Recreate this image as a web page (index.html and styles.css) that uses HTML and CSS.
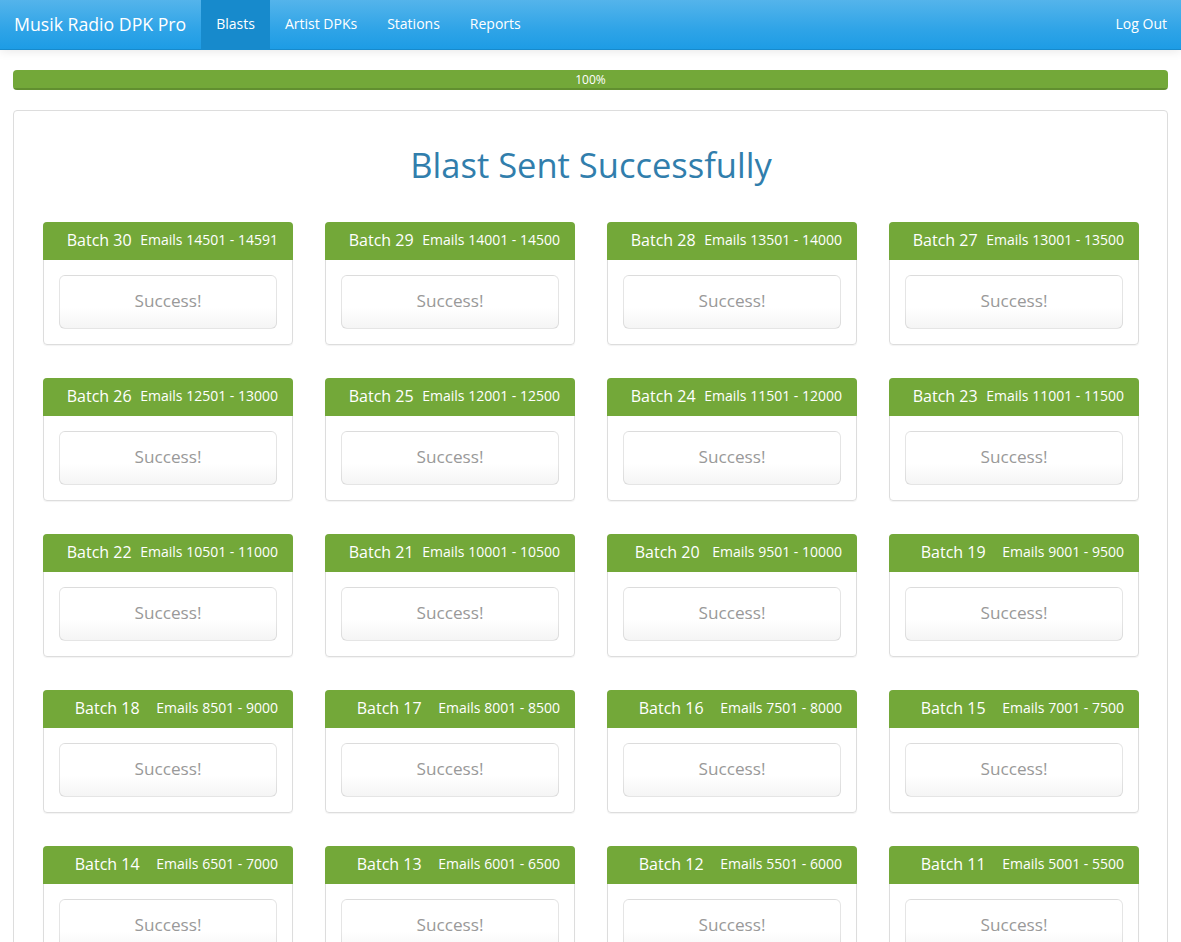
FILE: index.html
```html
<!DOCTYPE html>
<html lang="en">
<head>
<meta charset="utf-8">
<title>Musik Radio DPK Pro - Blasts</title>
<link rel="stylesheet" href="styles.css">
</head>
<body>
<nav class="navbar">
  <a class="brand" href="#">Musik Radio DPK Pro</a>
  <ul class="nav">
    <li class="active"><a href="#">Blasts</a></li>
    <li><a href="#">Artist DPKs</a></li>
    <li><a href="#">Stations</a></li>
    <li><a href="#">Reports</a></li>
  </ul>
  <ul class="nav nav-right">
    <li><a href="#">Log Out</a></li>
  </ul>
</nav>

<main class="page">
  <div class="progress"><div class="progress-bar">100%</div></div>

  <section class="panel">
    <h1 class="title">Blast Sent Successfully</h1>
    <div class="batches">
      <div class="batch"><div class="batch-head"><span class="batch-name">Batch 30</span><span class="batch-range">Emails 14501 - 14591</span></div><div class="batch-body"><div class="status">Success!</div></div></div>
      <div class="batch"><div class="batch-head"><span class="batch-name">Batch 29</span><span class="batch-range">Emails 14001 - 14500</span></div><div class="batch-body"><div class="status">Success!</div></div></div>
      <div class="batch"><div class="batch-head"><span class="batch-name">Batch 28</span><span class="batch-range">Emails 13501 - 14000</span></div><div class="batch-body"><div class="status">Success!</div></div></div>
      <div class="batch"><div class="batch-head"><span class="batch-name">Batch 27</span><span class="batch-range">Emails 13001 - 13500</span></div><div class="batch-body"><div class="status">Success!</div></div></div>
      <div class="batch"><div class="batch-head"><span class="batch-name">Batch 26</span><span class="batch-range">Emails 12501 - 13000</span></div><div class="batch-body"><div class="status">Success!</div></div></div>
      <div class="batch"><div class="batch-head"><span class="batch-name">Batch 25</span><span class="batch-range">Emails 12001 - 12500</span></div><div class="batch-body"><div class="status">Success!</div></div></div>
      <div class="batch"><div class="batch-head"><span class="batch-name">Batch 24</span><span class="batch-range">Emails 11501 - 12000</span></div><div class="batch-body"><div class="status">Success!</div></div></div>
      <div class="batch"><div class="batch-head"><span class="batch-name">Batch 23</span><span class="batch-range">Emails 11001 - 11500</span></div><div class="batch-body"><div class="status">Success!</div></div></div>
      <div class="batch"><div class="batch-head"><span class="batch-name">Batch 22</span><span class="batch-range">Emails 10501 - 11000</span></div><div class="batch-body"><div class="status">Success!</div></div></div>
      <div class="batch"><div class="batch-head"><span class="batch-name">Batch 21</span><span class="batch-range">Emails 10001 - 10500</span></div><div class="batch-body"><div class="status">Success!</div></div></div>
      <div class="batch"><div class="batch-head"><span class="batch-name">Batch 20</span><span class="batch-range">Emails 9501 - 10000</span></div><div class="batch-body"><div class="status">Success!</div></div></div>
      <div class="batch"><div class="batch-head"><span class="batch-name">Batch 19</span><span class="batch-range">Emails 9001 - 9500</span></div><div class="batch-body"><div class="status">Success!</div></div></div>
      <div class="batch"><div class="batch-head"><span class="batch-name">Batch 18</span><span class="batch-range">Emails 8501 - 9000</span></div><div class="batch-body"><div class="status">Success!</div></div></div>
      <div class="batch"><div class="batch-head"><span class="batch-name">Batch 17</span><span class="batch-range">Emails 8001 - 8500</span></div><div class="batch-body"><div class="status">Success!</div></div></div>
      <div class="batch"><div class="batch-head"><span class="batch-name">Batch 16</span><span class="batch-range">Emails 7501 - 8000</span></div><div class="batch-body"><div class="status">Success!</div></div></div>
      <div class="batch"><div class="batch-head"><span class="batch-name">Batch 15</span><span class="batch-range">Emails 7001 - 7500</span></div><div class="batch-body"><div class="status">Success!</div></div></div>
      <div class="batch"><div class="batch-head"><span class="batch-name">Batch 14</span><span class="batch-range">Emails 6501 - 7000</span></div><div class="batch-body"><div class="status">Success!</div></div></div>
      <div class="batch"><div class="batch-head"><span class="batch-name">Batch 13</span><span class="batch-range">Emails 6001 - 6500</span></div><div class="batch-body"><div class="status">Success!</div></div></div>
      <div class="batch"><div class="batch-head"><span class="batch-name">Batch 12</span><span class="batch-range">Emails 5501 - 6000</span></div><div class="batch-body"><div class="status">Success!</div></div></div>
      <div class="batch"><div class="batch-head"><span class="batch-name">Batch 11</span><span class="batch-range">Emails 5001 - 5500</span></div><div class="batch-body"><div class="status">Success!</div></div></div>
      <div class="batch"><div class="batch-head"><span class="batch-name">Batch 10</span><span class="batch-range">Emails 4501 - 5000</span></div><div class="batch-body"><div class="status">Success!</div></div></div>
      <div class="batch"><div class="batch-head"><span class="batch-name">Batch 9</span><span class="batch-range">Emails 4001 - 4500</span></div><div class="batch-body"><div class="status">Success!</div></div></div>
      <div class="batch"><div class="batch-head"><span class="batch-name">Batch 8</span><span class="batch-range">Emails 3501 - 4000</span></div><div class="batch-body"><div class="status">Success!</div></div></div>
      <div class="batch"><div class="batch-head"><span class="batch-name">Batch 7</span><span class="batch-range">Emails 3001 - 3500</span></div><div class="batch-body"><div class="status">Success!</div></div></div>
      <div class="batch"><div class="batch-head"><span class="batch-name">Batch 6</span><span class="batch-range">Emails 2501 - 3000</span></div><div class="batch-body"><div class="status">Success!</div></div></div>
      <div class="batch"><div class="batch-head"><span class="batch-name">Batch 5</span><span class="batch-range">Emails 2001 - 2500</span></div><div class="batch-body"><div class="status">Success!</div></div></div>
      <div class="batch"><div class="batch-head"><span class="batch-name">Batch 4</span><span class="batch-range">Emails 1501 - 2000</span></div><div class="batch-body"><div class="status">Success!</div></div></div>
      <div class="batch"><div class="batch-head"><span class="batch-name">Batch 3</span><span class="batch-range">Emails 1001 - 1500</span></div><div class="batch-body"><div class="status">Success!</div></div></div>
      <div class="batch"><div class="batch-head"><span class="batch-name">Batch 2</span><span class="batch-range">Emails 501 - 1000</span></div><div class="batch-body"><div class="status">Success!</div></div></div>
      <div class="batch"><div class="batch-head"><span class="batch-name">Batch 1</span><span class="batch-range">Emails 1 - 500</span></div><div class="batch-body"><div class="status">Success!</div></div></div>
    </div>
  </section>
</main>
</body>
</html>
```

FILE: styles.css
```css
* { box-sizing: border-box; }

html, body {
  margin: 0;
  padding: 0;
}

body {
  font-family: "Open Sans", "Noto Sans", "DejaVu Sans", sans-serif;
  font-size: 14px;
  line-height: 20px;
  color: #555;
  background: #fff;
}

a { text-decoration: none; }

/* navbar */
.navbar {
  display: flex;
  align-items: stretch;
  height: 50px;
  background-image: linear-gradient(#54b4eb, #2fa4e7 60%, #1d9ce5);
  border-bottom: 1px solid #178acc;
  box-shadow: 0 1px 10px rgba(0, 0, 0, 0.1);
}

.brand {
  display: block;
  padding: 14px 15px 0 14px;
  font-size: 17.7px;
  line-height: 20px;
  color: #fff;
}

.nav {
  display: flex;
  list-style: none;
  margin: 0;
  padding: 0;
}

.nav li a {
  display: block;
  height: 49px;
  padding: 14px 15px 0;
  color: #fff;
  font-size: 14px;
  line-height: 20px;
}

.nav li.active a {
  background-color: #178acc;
}

.nav-right {
  margin-left: auto;
}

.nav-right li a {
  padding-right: 14px;
}

/* page */
.page {
  padding: 20px 13px 0;
}

.progress {
  height: 20px;
  border-radius: 4px;
  background: #f5f5f5;
  overflow: hidden;
  margin-bottom: 20px;
}

.progress-bar {
  height: 100%;
  width: 100%;
  background-color: #73a839;
  box-shadow: inset 0 -2px 0 rgba(0, 0, 0, 0.15);
  color: #fff;
  font-size: 12px;
  line-height: 20px;
  text-align: center;
}

.panel {
  border: 1px solid #ddd;
  border-radius: 4px;
  padding: 15px 28px 40px 29px;
}

.title {
  margin: 19px 0 37px;
  font-size: 34.5px;
  font-weight: 400;
  line-height: 40px;
  text-align: center;
  color: #317eac;
}

.batches {
  display: grid;
  grid-template-columns: repeat(4, 1fr);
  column-gap: 32px;
  row-gap: 33px;
}

.batch {
  border: 1px solid #ddd;
  border-radius: 4px;
  box-shadow: 0 1px 1px rgba(0, 0, 0, 0.05);
}

.batch-head {
  display: flex;
  align-items: center;
  height: 38px;
  margin: -1px -1px 0;
  padding: 0 15px 2px;
  background-color: #73a839;
  border-radius: 4px 4px 0 0;
  color: #fff;
}

.batch-name {
  flex: 1;
  text-align: center;
  font-size: 16px;
}

.batch-range {
  font-size: 14px;
}

.batch-body {
  padding: 15px;
}

.status {
  height: 54px;
  border: 1px solid rgba(0, 0, 0, 0.1);
  border-radius: 6px;
  background-image: linear-gradient(#fff, #fff 60%, #f5f5f5);
  color: #999;
  font-size: 17.2px;
  line-height: 50px;
  text-align: center;
}
```
